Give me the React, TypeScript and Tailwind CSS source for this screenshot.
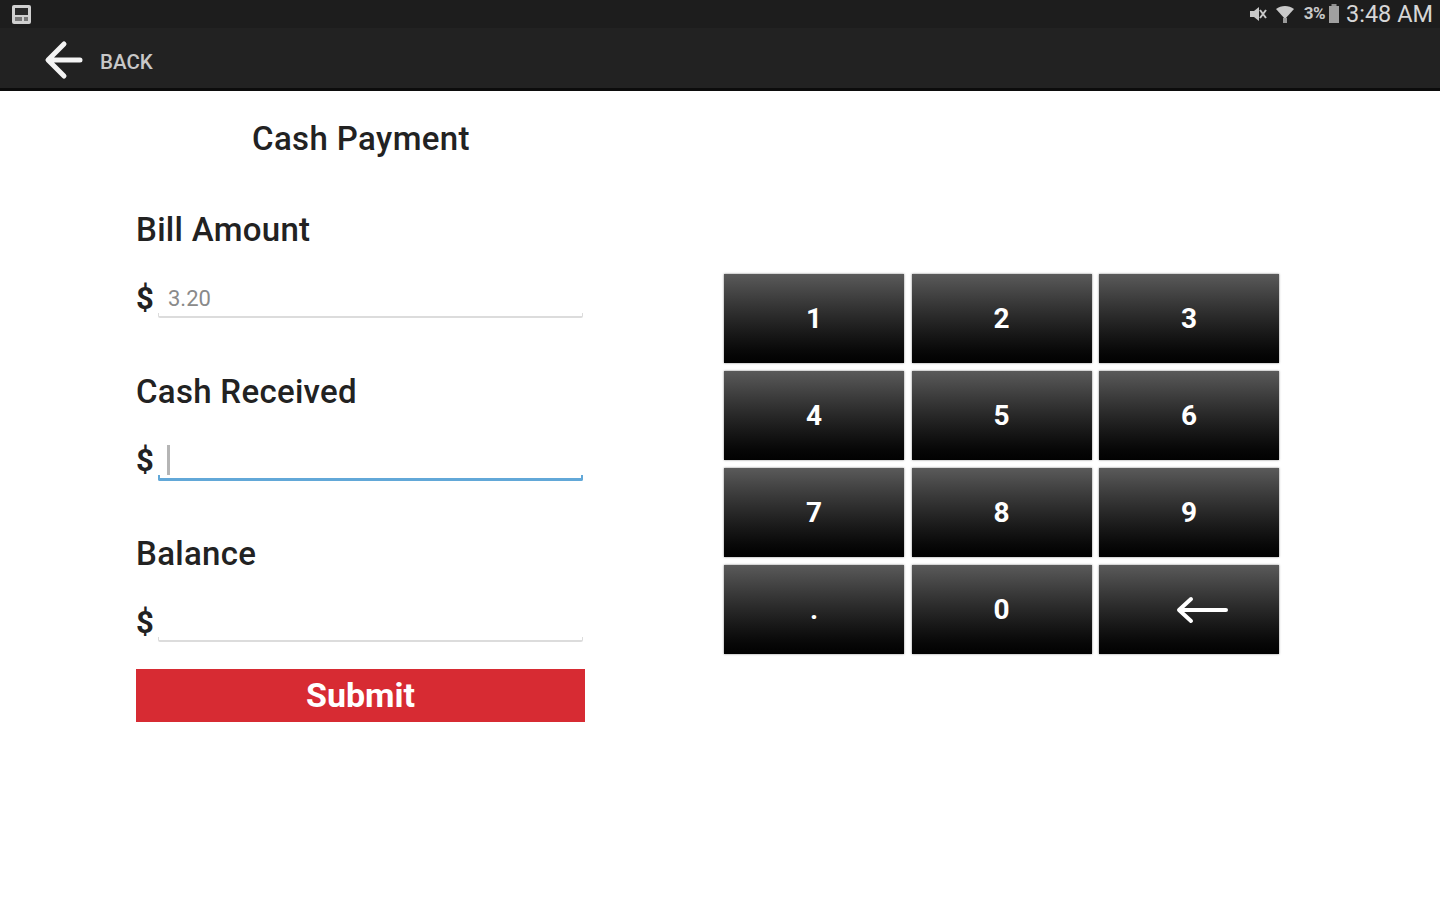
const KEYS = ['1', '2', '3', '4', '5', '6', '7', '8', '9', '.', '0'];

function Field({ label, value, focused }: { label: string; value?: string; focused?: boolean }) {
  return (
    <div className="flex flex-col">
      <div className="h-[36px] text-[33px] leading-[36px] font-medium tracking-[0.3px] text-[#222222]">{label}</div>
      <div className="mt-[30px] flex h-[40px] items-start">
        <span className="mt-[3px] w-[22px] shrink-0 text-[31px] leading-[36px] font-bold text-[#222222]">$</span>
        <div className="relative h-[40px] w-[425px]">
          {value && <span className="absolute left-[10px] top-[8px] text-[22px] leading-[26px] text-[#8a8a8a]">{value}</span>}
          {focused && <span className="absolute left-[9px] top-[5px] h-[30px] w-[3px] bg-[#b5b5b5]" />}
          <div className={focused ? 'absolute bottom-[-1px] left-0 right-0 h-[6px] rounded-b-[2px] border-x-2 border-b-[3px] border-[#62a8d8]' : 'absolute bottom-0 left-0 right-0 h-[5px] rounded-b-[2px] border-x border-b-2 border-[#dcdcdc]'} />
        </div>
      </div>
    </div>
  );
}

function KeyButton({ children }: { children: React.ReactNode }) {
  return (
    <button className="flex h-[89px] w-[180px] items-center justify-center bg-gradient-to-b from-[#5a5a5a] to-[#020202] text-[28px] font-bold text-white shadow-[0_0_2px_rgba(0,0,0,0.5)]">
      {children}
    </button>
  );
}

export default function App() {
  return (
    <div className="h-[900px] w-[1440px] overflow-hidden bg-white font-['Roboto',sans-serif]">
      <header className="h-[91px] border-b-[3px] border-[#0c0c0c] bg-[#222222]">
        <div className="flex h-[28px] items-center justify-between bg-[#1d1d1d] pl-[11px] pr-[7px]">
          <svg width="21" height="21" viewBox="0 0 21 21">
            <rect x="1" y="1" width="19" height="19" rx="2" fill="#d0d0d0" />
            <rect x="4" y="4" width="13" height="7" fill="#2a2a2a" />
            <path d="M4 13h7v4H4zM13 13h4v4h-4z" fill="#777777" />
          </svg>
          <div className="flex items-center text-[#c9c9c9]">
            <svg width="18" height="16" viewBox="0 0 18 16" fill="#c9c9c9">
              <path d="M1 5h4l5-4v14l-5-4H1z" />
              <path d="M11 4l6 8M17 4l-6 8" stroke="#c9c9c9" strokeWidth="2" />
            </svg>
            <svg className="ml-[8px]" width="20" height="20" viewBox="0 0 20 20" fill="#c9c9c9">
              <path d="M1 5c5-4 13-4 18 0l-9 10z" />
              <rect x="8" y="14" width="4" height="5" fill="#9a9a9a" />
            </svg>
            <span className="ml-[9px] text-[17px] font-bold tracking-[-0.5px]">3%</span>
            <svg className="ml-[3px]" width="12" height="20" viewBox="0 0 12 20">
              <rect x="3.5" y="0" width="5" height="2" fill="#8f8f8f" />
              <rect x="1" y="2" width="10" height="17" fill="#a0a0a0" />
            </svg>
            <span className="ml-[6px] text-[23.5px] leading-[28px] text-[#d6d6d6]">3:48 AM</span>
          </div>
        </div>
        <div className="flex h-[60px] items-center pl-[44px] pt-[4px]">
          <svg width="40" height="40" viewBox="0 0 40 40" fill="none" stroke="#f4f4f4" strokeWidth="5" strokeLinecap="round" strokeLinejoin="round">
            <path d="M36 20H5M20 4L4 20l16 16" />
          </svg>
          <span className="ml-[16px] mt-[4px] text-[20.5px] font-medium text-[#c8c8c8]">BACK</span>
        </div>
      </header>
      <main className="flex">
        <section className="ml-[136px] w-[450px]">
          <h1 className="mt-[30px] h-[36px] text-center text-[33px] leading-[36px] font-medium tracking-[0.4px] text-[#222222]">Cash Payment</h1>
          <div className="mt-[55px] flex flex-col gap-[56px]">
            <Field label="Bill Amount" value="3.20" />
            <Field label="Cash Received" focused />
            <Field label="Balance" />
          </div>
          <button className="mt-[27px] flex h-[53px] w-[449px] items-center justify-center bg-[#d72b33] text-[34px] font-bold text-white">Submit</button>
        </section>
        <section className="ml-[138px] mt-[183px] grid grid-cols-[180px_180px_180px] gap-x-[7.5px] gap-y-[8px] self-start">
          {KEYS.map((key) => (
            <KeyButton key={key}>{key}</KeyButton>
          ))}
          <KeyButton>
            <svg className="ml-[26px]" width="52" height="28" viewBox="0 0 52 28" fill="none" stroke="#ffffff" strokeWidth="4" strokeLinecap="round" strokeLinejoin="round">
              <path d="M50 14H4M15 3L3 14l12 11" />
            </svg>
          </KeyButton>
        </section>
      </main>
    </div>
  );
}
